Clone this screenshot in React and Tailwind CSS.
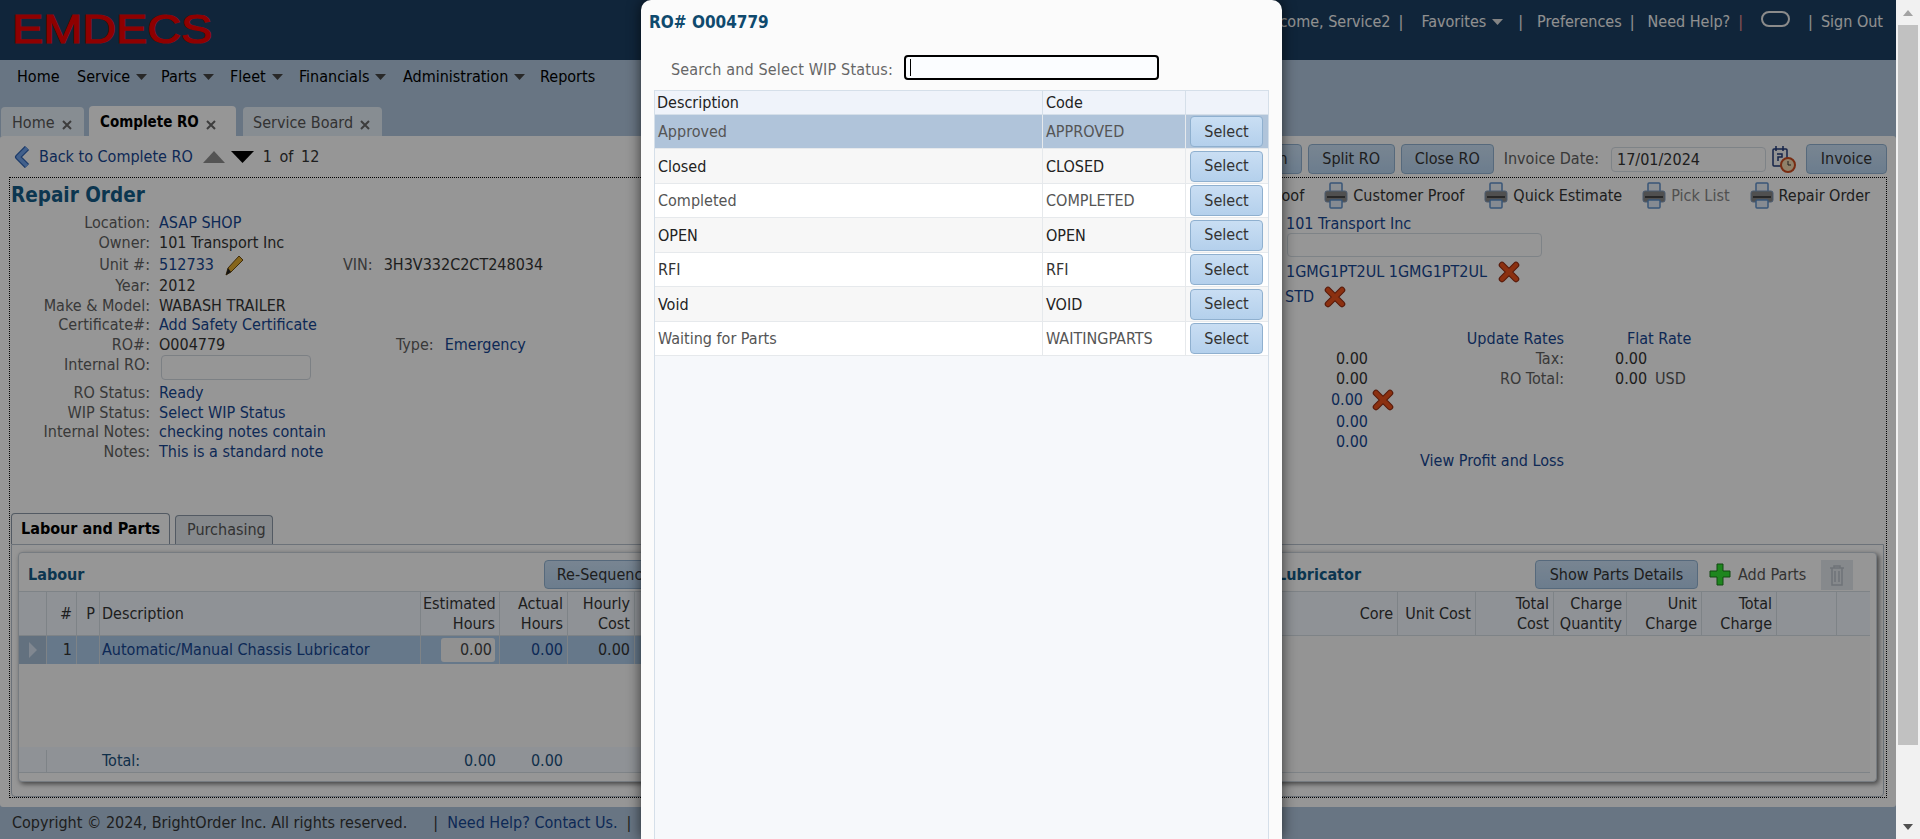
import React from "react";

const LINK = "text-[#16458f]";
const LABEL = "text-[#5f5f5f]";

function Caret({ className = "", fill = "#444" }) {
  return (
    <svg className={className} width="11" height="6" viewBox="0 0 11 6">
      <path d="M0 0h11L5.5 6z" fill={fill} />
    </svg>
  );
}

function TabClose() {
  return (
    <svg className="ml-[7px] mt-[5px]" width="10" height="10" viewBox="0 0 10 10">
      <path d="M1 1l8 8M9 1L1 9" stroke="#666" strokeWidth="2" />
    </svg>
  );
}

function RedX({ className = "" }) {
  return (
    <svg className={className} width="22" height="22" viewBox="0 0 22 22">
      <path d="M4 4l14 14M18 4L4 18" stroke="#8f2a10" strokeWidth="6.5" strokeLinecap="round" />
      <path d="M4 4l14 14M18 4L4 18" stroke="#e8501c" strokeWidth="4.5" strokeLinecap="round" />
    </svg>
  );
}

function PrintIcon() {
  return (
    <svg width="24" height="28" viewBox="0 0 24 28" className="shrink-0">
      <rect x="6" y="1" width="12" height="9" rx="1" fill="#e8eef6" stroke="#5d8fc8" strokeWidth="1.5" />
      <rect x="1" y="9" width="22" height="11" rx="2" fill="#868686" stroke="#7d97b8" />
      <rect x="3" y="14" width="18" height="2" fill="#444" />
      <rect x="6" y="18" width="12" height="8" rx="1" fill="#dfe8f3" stroke="#5d8fc8" strokeWidth="1.5" />
    </svg>
  );
}

function Button({ className = "", children }) {
  return (
    <button className={`flex items-center justify-center rounded-[4px] border border-[#8fb0cf] bg-gradient-to-b from-[#c9def3] to-[#b4d0ec] text-[#333] ${className}`}>
      {children}
    </button>
  );
}

function PrintLink({ label, muted }) {
  return (
    <span className="flex items-center gap-[5px]">
      <PrintIcon />
      <span className={muted ? "text-[#858585]" : "text-[#333]"}>{label}</span>
    </span>
  );
}

const formRows = [
  { h: "h-[20px]", label: "Location:", value: "ASAP SHOP", link: true },
  { h: "h-[20px]", label: "Owner:", value: "101 Transport Inc" },
  { h: "h-[23px]", label: "Unit #:", value: "512733", link: true, pencil: true, vin: true },
  { h: "h-[20px]", label: "Year:", value: "2012" },
  { h: "h-[19px]", label: "Make & Model:", value: "WABASH TRAILER" },
  { h: "h-[20px]", label: "Certificate#:", value: "Add Safety Certificate", link: true },
  { h: "h-[20px]", label: "RO#:", value: "O004779", type: true },
  { h: "h-[28px]", label: "Internal RO:", input: true },
  { h: "h-[20px]", label: "RO Status:", value: "Ready", link: true },
  { h: "h-[19px]", label: "WIP Status:", value: "Select WIP Status", link: true },
  { h: "h-[20px]", label: "Internal Notes:", value: "checking notes contain", link: true },
  { h: "h-[19px]", label: "Notes:", value: "This is a standard note", link: true },
];

function FormRow({ row }) {
  return (
    <div className={`flex whitespace-nowrap ${row.h} ${row.input ? "items-start" : "items-center"}`}>
      <span className={`w-[140px] text-right ${LABEL}`}>{row.label}</span>
      {row.input ? (
        <div className="ml-[11px] h-[25px] w-[150px] rounded-[4px] border border-[#cfd6dd] bg-[#fafafa]" />
      ) : (
        <span className={`ml-[9px] flex items-center ${row.vin ? "w-[184px]" : row.type ? "w-[237px]" : ""} ${row.link ? LINK : "text-[#333]"}`}>
          {row.value}
          {row.pencil && (
            <svg className="ml-[9px]" width="22" height="24" viewBox="0 0 22 24">
              <path d="M3 22l2-7L16 3l4 4L8 19z" fill="#e0a92e" stroke="#6b4a10" />
              <path d="M3 22l2-7 3 4z" fill="#222" />
            </svg>
          )}
        </span>
      )}
      {row.vin && (
        <>
          <span className={LABEL}>VIN:</span>
          <span className="ml-[11px] text-[#333]">3H3V332C2CT248034</span>
        </>
      )}
      {row.type && (
        <>
          <span className={LABEL}>Type:</span>
          <span className={`ml-[11px] ${LINK}`}>Emergency</span>
        </>
      )}
    </div>
  );
}

function AmountRow({ h, a, aLink, aw = "w-[727px]", x, b, bLink, c, cLink, cm = "ml-[51px]", usd }) {
  return (
    <div className={`flex items-center whitespace-nowrap ${h}`}>
      <span className={`${aw} text-right ${aLink ? LINK : "text-[#333]"}`}>{a}</span>
      {x && <RedX className="ml-[9px]" />}
      {!x && <span className={`w-[196px] text-right ${bLink ? LINK : LABEL}`}>{b}</span>}
      <span className={`${cm} ${cLink ? LINK : "text-[#333]"}`}>{c}</span>
      {usd && <span className="ml-[8px] text-[#555]">USD</span>}
    </div>
  );
}

function HeadCell({ w, align = "text-right", last, children }) {
  return (
    <div className={`flex h-full shrink-0 items-center pl-[2px] pr-[4px] leading-[20px] ${w} ${align} ${last ? "" : "border-r border-[#d3dae2]"}`}>
      <span className="w-full">{children}</span>
    </div>
  );
}

function LabourGrid() {
  return (
    <div className="flex h-[182px] flex-col">
      <div className="flex h-[45px] items-center border-y border-[#d3dae2] bg-[#eff3fa] text-[#333]">
        <HeadCell w="w-[28px]" />
        <HeadCell w="w-[30px]">#</HeadCell>
        <HeadCell w="w-[23px]">P</HeadCell>
        <HeadCell w="w-[321px]" align="text-left">Description</HeadCell>
        <HeadCell w="w-[79px]">Estimated<br />Hours</HeadCell>
        <HeadCell w="w-[68px]">Actual<br />Hours</HeadCell>
        <HeadCell w="w-[67px]">Hourly<br />Cost</HeadCell>
      </div>
      <div className="flex h-[28px] items-center bg-[#aac8e6] text-[#333]">
        <div className="flex h-full w-[28px] shrink-0 items-center justify-center border-r border-[#d3dae2] bg-[#a5bcd4]">
          <svg width="10" height="16" viewBox="0 0 10 16"><path d="M1 0l8 8-8 8z" fill="#d5e2f0" /></svg>
        </div>
        <div className="h-full w-[30px] shrink-0 border-r border-[#d3dae2] px-[4px] text-right leading-[28px]">1</div>
        <div className="h-full w-[23px] shrink-0 border-r border-[#d3dae2]" />
        <div className={`h-full w-[321px] shrink-0 border-r border-[#d3dae2] pl-[2px] leading-[28px] ${LINK}`}>Automatic/Manual Chassis Lubricator</div>
        <div className="flex h-full w-[79px] shrink-0 items-center justify-end border-r border-[#d3dae2] px-[4px]">
          <div className="h-[24px] w-[54px] rounded-[3px] bg-[#f2f2f2] pr-[3px] text-right leading-[24px] text-[#444]">0.00</div>
        </div>
        <div className={`h-full w-[68px] shrink-0 border-r border-[#d3dae2] px-[4px] text-right leading-[28px] ${LINK}`}>0.00</div>
        <div className="h-full w-[67px] shrink-0 border-r border-[#d3dae2] px-[4px] text-right leading-[28px]">0.00</div>
      </div>
      <div className="flex-1 bg-[#f7f7f7]" />
      <div className="flex h-[26px] items-center border-b border-[#d3dae2] bg-[#eff3fa] pt-[3px] text-[#1a4f7a]">
        <div className="h-full w-[28px] shrink-0 border-r border-[#d3dae2]" />
        <span className="ml-[55px] w-[340px]">Total:</span>
        <span className="w-[54px] text-right">0.00</span>
        <span className="w-[67px] text-right">0.00</span>
      </div>
    </div>
  );
}

function PartsGrid() {
  return (
    <div className="flex h-[182px] flex-col">
      <div className="flex h-[45px] items-center justify-end border-y border-[#d3dae2] bg-[#eff3fa] text-[#333]">
        <HeadCell w="w-[46px]">Core</HeadCell>
        <HeadCell w="w-[78px]">Unit Cost</HeadCell>
        <HeadCell w="w-[78px]">Total<br />Cost</HeadCell>
        <HeadCell w="w-[73px]">Charge<br />Quantity</HeadCell>
        <HeadCell w="w-[75px]">Unit<br />Charge</HeadCell>
        <HeadCell w="w-[75px]">Total<br />Charge</HeadCell>
        <HeadCell w="w-[60px]" />
        <HeadCell w="w-[33px]" last />
      </div>
      <div className="flex-1 border-b border-[#d3dae2] bg-[#f7f7f7]" />
    </div>
  );
}

const wipRows = [
  { name: "Approved", code: "APPROVED", bg: "bg-[#b0c4da]", text: "text-[#555]", h: "h-[34px]" },
  { name: "Closed", code: "CLOSED", bg: "bg-[#f7f7f7]", text: "text-[#222]", h: "h-[35px]" },
  { name: "Completed", code: "COMPLETED", bg: "bg-white", text: "text-[#555]", h: "h-[34px]" },
  { name: "OPEN", code: "OPEN", bg: "bg-[#f7f7f7]", text: "text-[#222]", h: "h-[35px]" },
  { name: "RFI", code: "RFI", bg: "bg-white", text: "text-[#333]", h: "h-[34px]" },
  { name: "Void", code: "VOID", bg: "bg-[#f7f7f7]", text: "text-[#222]", h: "h-[35px]" },
  { name: "Waiting for Parts", code: "WAITINGPARTS", bg: "bg-white", text: "text-[#555]", h: "h-[34px]" },
];

function WipModal() {
  return (
    <div className="absolute left-[641px] top-0 flex h-[839px] w-[641px] flex-col rounded-t-[10px] bg-[#fbfbfb] shadow-[0_0_14px_rgba(0,0,0,0.65)]">
      <div className="ml-[8px] mt-[13px] h-[42px] text-[17px] font-bold leading-[18px] text-[#0f4a6e]">RO# O004779</div>
      <div className="flex h-[35px] items-start">
        <span className="ml-[30px] w-[233px] pt-[5px] tracking-[0.17px] text-[#666]">Search and Select WIP Status:</span>
        <div className="h-[25px] w-[255px] rounded-[4px] border-2 border-black bg-[#fbfdff] pl-[4px] pt-[2px]">
          <div className="h-[17px] w-[1px] bg-black" />
        </div>
      </div>
      <div className="mx-[13px] flex flex-1 flex-col border-x border-t border-[#d5dfe9] bg-[#f6f8fb]">
        <div className="flex h-[24px] border-b border-[#d5dfe9] bg-[#eff3fa] leading-[24px] text-[#222]">
          <div className="w-[388px] border-r border-[#d5dfe9] pl-[2px]">Description</div>
          <div className="w-[143px] border-r border-[#d5dfe9] pl-[3px]">Code</div>
        </div>
        {wipRows.map((row) => (
          <div key={row.code} className={`flex items-center border-b border-[#e6e9ec] ${row.h} ${row.bg} ${row.text}`}>
            <div className="flex h-full w-[388px] items-center border-r border-[#e6e9ec] pl-[3px] pt-[1px]">{row.name}</div>
            <div className="flex h-full w-[143px] items-center border-r border-[#e6e9ec] pl-[3px] pt-[1px]">{row.code}</div>
            <Button className="ml-[4px] h-[31px] w-[73px]">Select</Button>
          </div>
        ))}
      </div>
    </div>
  );
}

const menus = [
  ["Service", "w-[84px]"],
  ["Parts", "w-[69px]"],
  ["Fleet", "w-[69px]"],
  ["Financials", "w-[104px]"],
  ["Administration", "w-[137px]"],
];

export default function App() {
  return (
    <div className="relative flex h-[839px] w-[1920px] overflow-hidden bg-white text-[16px] leading-[20px] [font-family:'DejaVu_Sans_Condensed','DejaVu_Sans',sans-serif] [font-stretch:condensed]">
      <div className="flex w-[1896px] flex-col bg-[#adc3da]">
        {/* Top bar */}
        <header className="flex h-[60px] items-start justify-between bg-[#1b3f62]">
          <div className="ml-[12px] mt-[8px] origin-left scale-x-[1.17] text-[40px] leading-[42px] text-[#ee0000] [-webkit-text-stroke:1.2px_#ee0000] [font-family:'Liberation_Sans',sans-serif]">EMDECS</div>
          <div className="mr-[13px] mt-[12px] flex items-center whitespace-nowrap text-[#f0f0f0]">
            <span>Welcome, Service2</span>
            <span className="ml-[8px]">|</span>
            <span className="ml-[18px]">Favorites</span>
            <Caret className="ml-[6px]" fill="#ddd" />
            <span className="ml-[15px]">|</span>
            <span className="ml-[14px]">Preferences</span>
            <span className="ml-[8px]">|</span>
            <span className="ml-[13px]">Need Help?</span>
            <span className="ml-[8px] text-[#e28a8a]">|</span>
            <div className="-mt-[6px] ml-[18px] h-[16px] w-[29px] rounded-[8px] border-2 border-[#e8e8e8]" />
            <span className="ml-[18px]">|</span>
            <span className="ml-[8px]">Sign Out</span>
          </div>
        </header>

        {/* Menu */}
        <nav className="flex h-[46px] items-start whitespace-nowrap pl-[17px] pt-[7px] text-black">
          <span className="w-[60px]">Home</span>
          {menus.map(([name, w]) => (
            <span key={name} className={`flex items-center ${w}`}>
              {name}
              <Caret className="ml-[6px]" />
            </span>
          ))}
          <span>Reports</span>
        </nav>

        {/* Page tabs */}
        <div className="flex h-[30px] items-end pl-[1px]">
          <div className="flex h-[29px] w-[83px] items-center rounded-t-[4px] bg-[#e2ebf4] pl-[11px] pt-[2px] text-[#555]">Home<TabClose /></div>
          <div className="ml-[5px] flex h-[30px] w-[147px] items-center rounded-t-[4px] bg-[#fafafa] pl-[11px] pt-[2px] text-[15px] font-bold text-black">Complete RO<TabClose /></div>
          <div className="ml-[7px] flex h-[29px] w-[139px] items-center rounded-t-[4px] bg-[#e2ebf4] pl-[10px] pt-[2px] text-[#555]">Service Board<TabClose /></div>
        </div>

        {/* Content */}
        <main className="h-[671px] rounded-[3px] bg-[#fafafa]">
          <div className="flex h-[41px] items-center justify-between pl-[14px] pr-[9px]">
            <div className="flex items-center whitespace-nowrap">
              <svg width="18" height="22" viewBox="0 0 18 22">
                <path d="M13 2L4 11l9 9" fill="none" stroke="#2f62b0" strokeWidth="6" strokeLinejoin="round" />
                <path d="M13 2L4 11l9 9" fill="none" stroke="#6ea0e8" strokeWidth="3.5" strokeLinejoin="round" />
              </svg>
              <span className={`ml-[7px] ${LINK}`}>Back to Complete RO</span>
              <svg className="ml-[10px]" width="22" height="12" viewBox="0 0 22 12"><path d="M11 0l11 12H0z" fill="#8d8d8d" /></svg>
              <svg className="ml-[6px]" width="23" height="12" viewBox="0 0 23 12"><path d="M0 0h23L11.5 12z" fill="#000" /></svg>
              <span className="ml-[9px] text-[#333] [word-spacing:3px]">1 of 12</span>
            </div>
            <div className="mt-[5px] flex items-center whitespace-nowrap">
              <Button className="h-[30px] w-[88px] !justify-end pr-[13px]">n</Button>
              <Button className="ml-[6px] h-[30px] w-[87px]">Split RO</Button>
              <Button className="ml-[6px] h-[30px] w-[93px]">Close RO</Button>
              <span className={`ml-[10px] ${LABEL}`}>Invoice Date:</span>
              <div className="ml-[12px] h-[25px] w-[155px] rounded-[4px] border border-[#d3dae2] pl-[5px] leading-[24px] text-[#333]">17/01/2024</div>
              <svg className="ml-[6px]" width="24" height="28" viewBox="0 0 24 28">
                <rect x="1" y="4" width="14" height="17" rx="1" fill="#f4f4f4" stroke="#223a78" strokeWidth="1.5" />
                <path d="M4 1v5M11 1v5M5 9h5v3H6v4" fill="none" stroke="#223a78" strokeWidth="1.5" />
                <circle cx="16" cy="20" r="7" fill="#f0d8b0" stroke="#c94a1e" strokeWidth="2" />
                <path d="M16 16v4h3" fill="none" stroke="#333" />
              </svg>
              <Button className="ml-[10px] h-[30px] w-[81px]">Invoice</Button>
            </div>
          </div>

          <div className="ml-[9px] h-[621px] w-[1878px] border border-dotted border-black">
            <div className="flex h-[336px]">
              <div className="w-[631px] shrink-0">
                <h1 className="h-[35px] pl-[1px] pt-[7px] text-[20.5px] font-bold leading-[20px] text-[#145a85]">Repair Order</h1>
                {formRows.map((row) => (
                  <FormRow key={row.label} row={row} />
                ))}
              </div>
              <div className="w-[1245px] shrink-0">
                <div className="flex h-[35px] items-center justify-end gap-[20px] whitespace-nowrap pr-[16px]">
                  <span className="text-[#333]">Shop Proof</span>
                  <PrintLink label="Customer Proof" />
                  <PrintLink label="Quick Estimate" />
                  <PrintLink label="Pick List" muted />
                  <PrintLink label="Repair Order" />
                </div>
                <div className={`flex h-[20px] items-center pl-[645px] pt-[1px] ${LINK}`}>101 Transport Inc</div>
                <div className="ml-[646px] h-[24px] w-[255px] rounded-[4px] border border-[#d3dae2]" />
                <div className={`flex h-[30px] items-center pl-[645px] ${LINK}`}>
                  1GMG1PT2UL 1GMG1PT2UL
                  <RedX className="ml-[11px]" />
                </div>
                <div className={`flex h-[20px] items-center pl-[644px] ${LINK}`}>
                  STD
                  <RedX className="ml-[10px]" />
                </div>
                <div className="h-[22px]" />
                <AmountRow h="h-[20px]" b="Update Rates" bLink c="Flat Rate" cLink cm="ml-[63px]" />
                <AmountRow h="h-[20px]" a="0.00" b="Tax:" c="0.00" />
                <AmountRow h="h-[19px]" a="0.00" b="RO Total:" c="0.00" usd />
                <AmountRow h="h-[24px]" a="0.00" aLink aw="w-[722px]" x />
                <AmountRow h="h-[20px]" a="0.00" aLink />
                <AmountRow h="h-[19px]" a="0.00" aLink />
                <AmountRow h="h-[20px]" b="View Profit and Loss" bLink />
              </div>
            </div>

            {/* Labour and parts */}
            <div className="flex h-[30px] items-end gap-[5px] pl-[1px]">
              <div className="flex h-[31px] w-[159px] items-center rounded-t-[4px] border-x border-t border-[#8a97a5] bg-[#fafafa] pl-[9px] font-bold text-black">Labour and Parts</div>
              <div className="flex h-[29px] w-[98px] items-center rounded-t-[4px] border-x border-t border-[#8a97a5] bg-[#dfe4e9] pl-[11px] text-[#555]">Purchasing</div>
            </div>
            <div className="ml-[1px] h-[253px] w-[1873px] rounded-b-[4px] border border-[#b4bfca] px-[6px] pt-[7px]">
              <section className="flex h-[230px] rounded-[4px] border border-[#c7cfd8] bg-[#fafafa] shadow-[2px_2px_5px_rgba(0,0,0,0.55)]">
                <div className="w-[981px] shrink-0">
                  <div className="flex h-[38px] items-start">
                    <span className="ml-[9px] mt-[12px] w-[516px] font-bold text-[#145a85]">Labour</span>
                    <Button className="mt-[7px] h-[29px] w-[120px]">Re-Sequence</Button>
                  </div>
                  <LabourGrid />
                </div>
                <div className="w-[870px] shrink-0">
                  <div className="flex h-[38px] items-start whitespace-nowrap">
                    <span className="mt-[12px] w-[361px] text-right font-bold text-[#145a85]">Automatic/Manual Chassis Lubricator</span>
                    <Button className="ml-[174px] mt-[7px] h-[29px] w-[163px]">Show Parts Details</Button>
                    <svg className="ml-[11px] mt-[8px]" width="22" height="26" viewBox="0 0 22 26">
                      <path d="M8 3h6v7h7v6h-7v8H8v-8H1v-6h7z" fill="#32e032" stroke="#1a7a1a" />
                    </svg>
                    <span className="ml-[7px] mt-[12px] text-[#555]">Add Parts</span>
                    <div className="ml-[15px] mt-[7px] flex h-[30px] w-[32px] items-center justify-center bg-[#dfe4e9]">
                      <svg width="16" height="22" viewBox="0 0 16 22" fill="none" stroke="#b9c0c7" strokeWidth="1.5">
                        <path d="M1 4h14M5 4V2h6v2M3 4v17h10V4M6 7v11M10 7v11" />
                      </svg>
                    </div>
                  </div>
                  <PartsGrid />
                </div>
              </section>
            </div>
          </div>
        </main>

        {/* Footer */}
        <footer className="flex h-[32px] items-center whitespace-nowrap pl-[12px] text-[#333]">
          Copyright © 2024, BrightOrder Inc. All rights reserved.
          <span className="ml-[26px]">|</span>
          <span className={`ml-[9px] ${LINK}`}>Need Help? Contact Us.</span>
          <span className="ml-[9px]">|</span>
        </footer>
      </div>

      {/* Scrollbar */}
      <div className="flex w-[24px] flex-col bg-[#f1f1f1]">
        <div className="flex h-[25px] items-center justify-center">
          <svg width="10" height="6" viewBox="0 0 10 6"><path d="M5 0l5 6H0z" fill="#a3a3a3" /></svg>
        </div>
        <div className="ml-[2px] h-[720px] w-[20px] bg-[#c1c1c1]" />
        <div className="mt-auto flex h-[25px] items-center justify-center">
          <svg width="10" height="6" viewBox="0 0 10 6"><path d="M0 0h10L5 6z" fill="#505050" /></svg>
        </div>
      </div>

      {/* Dim behind the dialog */}
      <div className="absolute inset-y-0 left-0 w-[1896px] bg-black/40" />
      <WipModal />
    </div>
  );
}
